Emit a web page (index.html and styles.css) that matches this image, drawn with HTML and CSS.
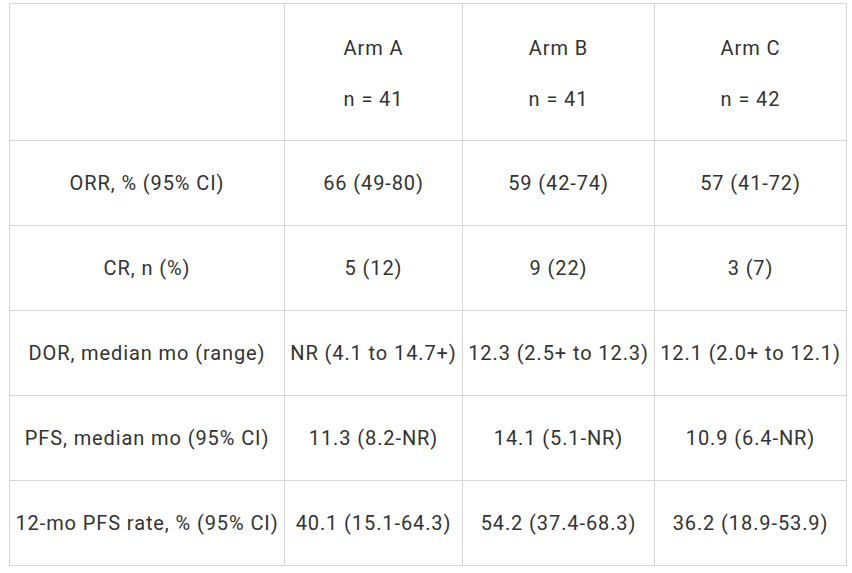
FILE: index.html
```html
<!DOCTYPE html>
<html>
<head>
<meta charset="utf-8">
<link rel="stylesheet" href="styles.css">
</head>
<body>
<table class="results">
  <colgroup>
    <col class="c1"><col class="c2"><col class="c3"><col class="c4">
  </colgroup>
  <thead>
    <tr class="head">
      <th></th>
      <th><div class="arm">Arm A</div><div class="n">n = 41</div></th>
      <th><div class="arm">Arm B</div><div class="n">n = 41</div></th>
      <th><div class="arm">Arm C</div><div class="n">n = 42</div></th>
    </tr>
  </thead>
  <tbody>
    <tr><td>ORR, % (95% CI)</td><td>66 (49-80)</td><td>59 (42-74)</td><td>57 (41-72)</td></tr>
    <tr><td>CR, n (%)</td><td>5 (12)</td><td>9 (22)</td><td>3 (7)</td></tr>
    <tr><td>DOR, median mo (range)</td><td>NR (4.1 to 14.7+)</td><td>12.3 (2.5+ to 12.3)</td><td>12.1 (2.0+ to 12.1)</td></tr>
    <tr><td>PFS, median mo (95% CI)</td><td>11.3 (8.2-NR)</td><td>14.1 (5.1-NR)</td><td>10.9 (6.4-NR)</td></tr>
    <tr><td>12-mo PFS rate, % (95% CI)</td><td>40.1 (15.1-64.3)</td><td>54.2 (37.4-68.3)</td><td>36.2 (18.9-53.9)</td></tr>
  </tbody>
</table>
</body>
</html>
```

FILE: styles.css
```css
html, body {
  margin: 0;
  padding: 0;
  background: #ffffff;
}
body {
  padding: 3px 0 0 9px;
  font-family: Roboto, "Noto Sans", sans-serif;
  color: #333333;
}
.results {
  border-collapse: collapse;
  table-layout: fixed;
  width: 838px;
  font-size: 20px;
  letter-spacing: 0.9px;
}
.c1 { width: 275px; }
.c2 { width: 178px; }
.c3 { width: 192px; }
.c4 { width: 192px; }
.results th,
.results td {
  border: 1px solid #d6d6d6;
  text-align: center;
  vertical-align: middle;
  padding: 0;
  font-weight: 400;
  white-space: nowrap;
  line-height: 24px;
}
.results td {
  height: 84px;
}
.results th {
  height: 136px;
}
.arm {
  line-height: 24px;
  margin-top: 2px;
}
.n {
  line-height: 24px;
  margin-top: 27px;
}
```
